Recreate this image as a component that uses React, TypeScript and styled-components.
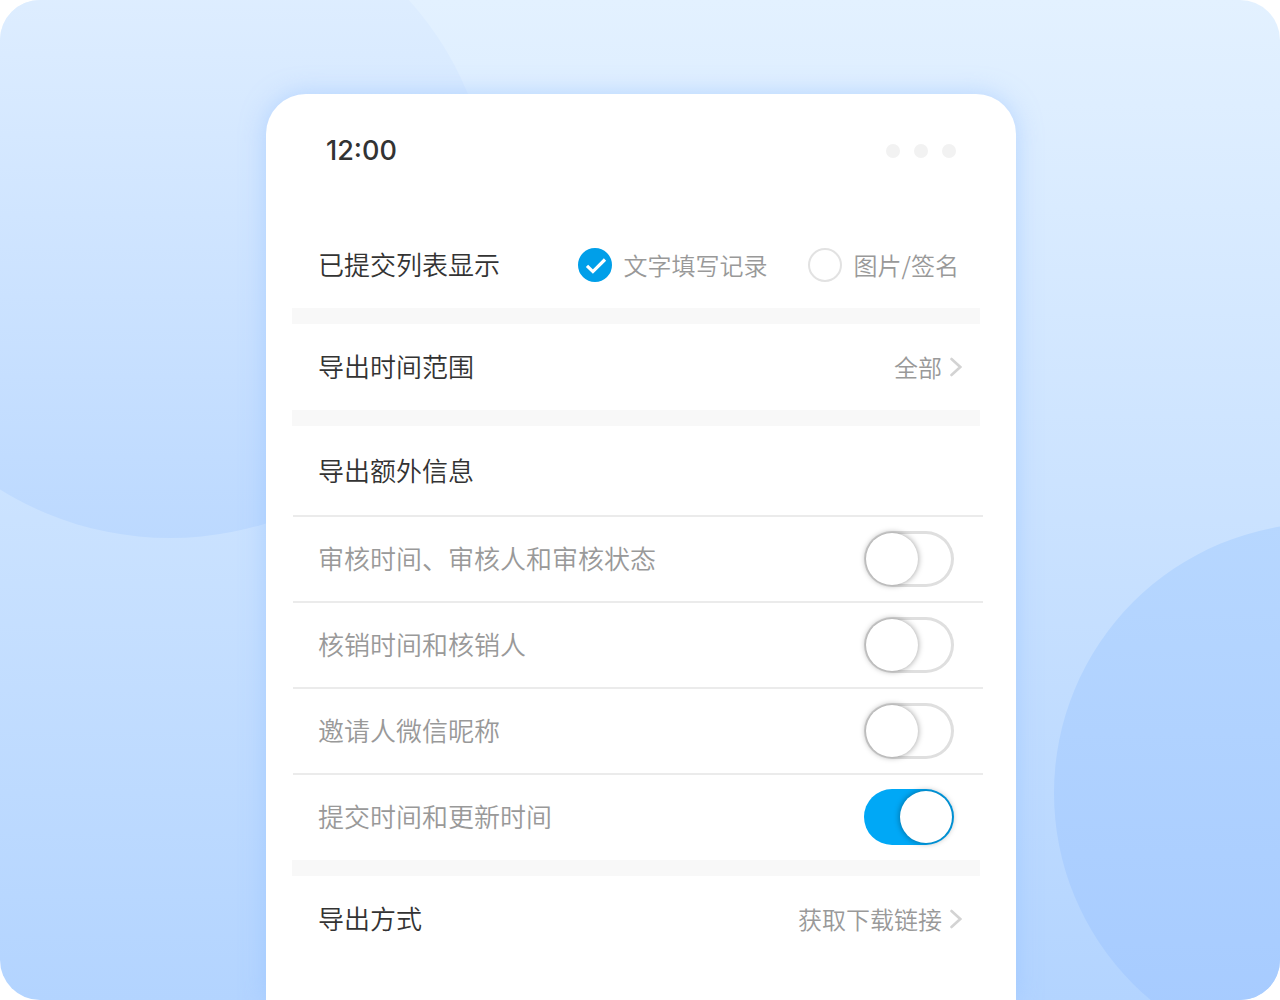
import React, { useState } from "react";
import styled, { createGlobalStyle } from "styled-components";

const GlobalStyle = createGlobalStyle`
  *, *::before, *::after { box-sizing: border-box; }
  body {
    margin: 0;
    background: #ffffff;
    color: #333333;
    font-family: "Noto Sans CJK SC", sans-serif;
    font-weight: 350;
  }
  button, input { font: inherit; color: inherit; }
`;

const Stage = styled.div`
  position: relative;
  z-index: 0;
  display: flex;
  flex-direction: column;
  min-height: 100vh;
  padding: 94px 264px 0 266px;
  overflow: hidden;
  border-radius: 40px;
  background: linear-gradient(180deg, #e3f1ff 0%, #b3d4ff 100%);

  @media (max-width: 1100px) {
    padding-left: 24px;
    padding-right: 24px;
  }
`;

const Bubble = styled.span<{ $size: number }>`
  position: absolute;
  z-index: -1;
  width: ${(p) => p.$size}px;
  height: ${(p) => p.$size}px;
  border-radius: 50%;
`;

const TopBubble = styled(Bubble)`
  left: -152px;
  top: -106px;
  background: linear-gradient(180deg, #e4f1ff 0%, #bcd9ff 100%);
`;

const BottomBubble = styled(Bubble)`
  right: -314px;
  bottom: -63px;
  background: linear-gradient(180deg, #b7d7ff 0%, #a5caff 100%);
`;

const Card = styled.main`
  flex: 1;
  border-radius: 40px 40px 0 0;
  background: #ffffff;
  box-shadow: 0 0 24px rgba(143, 190, 255, 0.5);
`;

const StatusBar = styled.header`
  display: flex;
  align-items: center;
  justify-content: space-between;
  height: 128px;
  padding: 0 60px 14px;
`;

const Clock = styled.time`
  font-family: Inter, sans-serif;
  font-size: 27px;
  line-height: 32px;
  font-weight: 500;
`;

const Dots = styled.div`
  display: flex;
  gap: 14px;
`;

const Dot = styled.span`
  width: 14px;
  height: 14px;
  border-radius: 50%;
  background: #f2f2f2;
`;

const Row = styled.div`
  display: flex;
  align-items: center;
  justify-content: space-between;
  min-height: 86px;
  padding: 0 54px 0 52px;
`;

const LinkRow = styled(Row).attrs({ as: "button", type: "button" })`
  width: 100%;
  border: 0;
  background: none;
  text-align: left;
  cursor: pointer;
`;

const Title = styled.span`
  padding-bottom: 2px;
  font-size: 26px;
  line-height: 40px;
`;

const Value = styled.span`
  display: flex;
  align-items: center;
  gap: 8px;
  color: #999999;
  font-size: 24px;
  line-height: 36px;
`;

const Band = styled.div`
  height: 16px;
  margin: 0 36px 0 26px;
  background: #f8f8f8;
`;

const SectionTitle = styled.h2`
  margin: 0;
  padding: 24px 52px 25px;
  font-size: 26px;
  line-height: 40px;
  font-weight: inherit;
`;

const SwitchList = styled.div`
  margin: 0 33px 0 27px;
  padding-bottom: 1px;
`;

const SwitchRow = styled.label`
  display: flex;
  align-items: center;
  justify-content: space-between;
  min-height: 86px;
  padding: 0 29px 0 25px;
  border-top: 2px solid #ebebeb;
  color: #999999;
  cursor: pointer;
`;

const Switch = styled.input`
  appearance: none;
  display: flex;
  align-items: center;
  width: 90px;
  height: 56px;
  margin: 0;
  padding: 0 2px;
  border-radius: 28px;
  background: #ffffff;
  box-shadow: inset 0 0 0 3px #dfdfdf;
  cursor: pointer;

  &::before {
    content: "";
    width: 52px;
    height: 52px;
    border-radius: 50%;
    background: #ffffff;
    box-shadow: 0 0 6px rgba(0, 0, 0, 0.4);
  }

  &:checked {
    justify-content: flex-end;
    background: #00a8f6;
    box-shadow: none;
  }
`;

const RadioGroup = styled.div`
  display: flex;
  gap: 40px;
  margin-right: 3px;
`;

const RadioLabel = styled.label`
  display: flex;
  align-items: center;
  gap: 12px;
  color: #999999;
  font-size: 24px;
  line-height: 36px;
  cursor: pointer;
`;

const RadioMark = styled.span`
  display: grid;
  place-items: center;

  & > * { grid-area: 1 / 1; }
  & > svg { pointer-events: none; }
`;

const Radio = styled.input`
  appearance: none;
  width: 34px;
  height: 34px;
  margin: 0;
  border: 2px solid #e2e2e2;
  border-radius: 50%;
  background: #ffffff;
  cursor: pointer;

  &:checked {
    border-color: #009fe9;
    background: #009fe9;
  }
`;

const Chevron = () => (
  <svg width="12" height="20" viewBox="0 0 12 20" fill="none" aria-hidden="true">
    <path d="M1.5 2 10.3 10 1.5 18" stroke="#d3d3d3" strokeWidth="2.6" strokeLinecap="round" />
  </svg>
);

const Check = () => (
  <svg width="34" height="34" viewBox="0 0 34 34" fill="none" aria-hidden="true">
    <path d="M9 17.8 14.9 23.6 27 11.5" stroke="#ffffff" strokeWidth="3.2" />
  </svg>
);

const displayModes = ["文字填写记录", "图片/签名"];
const extraFields = ["审核时间、审核人和审核状态", "核销时间和核销人", "邀请人微信昵称", "提交时间和更新时间"];

export default function App() {
  const [mode, setMode] = useState(displayModes[0]);
  const [enabled, setEnabled] = useState([false, false, false, true]);

  return (
    <>
      <GlobalStyle />
      <Stage>
        <TopBubble $size={644} />
        <BottomBubble $size={540} />
        <Card>
          <StatusBar>
            <Clock>12:00</Clock>
            <Dots>
              <Dot />
              <Dot />
              <Dot />
            </Dots>
          </StatusBar>
          <Row>
            <Title id="display-mode">已提交列表显示</Title>
            <RadioGroup role="radiogroup" aria-labelledby="display-mode">
              {displayModes.map((name) => (
                <RadioLabel key={name}>
                  <RadioMark>
                    <Radio
                      type="radio"
                      name="display-mode"
                      checked={mode === name}
                      onChange={() => setMode(name)}
                    />
                    {mode === name && <Check />}
                  </RadioMark>
                  {name}
                </RadioLabel>
              ))}
            </RadioGroup>
          </Row>
          <Band />
          <LinkRow>
            <Title>导出时间范围</Title>
            <Value>
              全部
              <Chevron />
            </Value>
          </LinkRow>
          <Band />
          <SectionTitle>导出额外信息</SectionTitle>
          <SwitchList>
            {extraFields.map((name, i) => (
              <SwitchRow key={name}>
                <Title>{name}</Title>
                <Switch
                  type="checkbox"
                  role="switch"
                  checked={enabled[i]}
                  onChange={() => setEnabled(enabled.map((on, j) => (j === i ? !on : on)))}
                />
              </SwitchRow>
            ))}
          </SwitchList>
          <Band />
          <LinkRow>
            <Title>导出方式</Title>
            <Value>
              获取下载链接
              <Chevron />
            </Value>
          </LinkRow>
        </Card>
      </Stage>
    </>
  );
}
